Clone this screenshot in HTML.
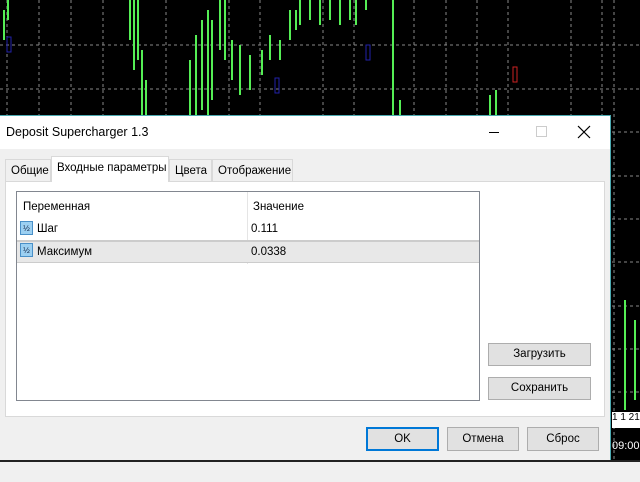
<html><head><style>
body{margin:0;width:640px;height:480px;overflow:hidden;background:#000;position:relative;font-family:"Liberation Sans",sans-serif;font-size:11.5px;color:#000}
.a{position:absolute;white-space:nowrap}
.btn{position:absolute;background:#e1e1e1;border:1px solid #adadad;box-sizing:border-box;text-align:center;font-size:11.5px}
.ic{position:absolute;width:13px;height:14px;background:#9cd0f2;border:1px solid #4a90c8;font-size:8px;color:#124;line-height:14px;text-align:center;box-sizing:border-box}
</style></head><body>
<svg class="a" style="left:0;top:0" width="640" height="480">
<g stroke="#888" stroke-dasharray="3,3" stroke-width="1">
<line x1="0" y1="45" x2="640" y2="45"/><line x1="0" y1="89" x2="640" y2="89"/><line x1="0" y1="132" x2="640" y2="132"/><line x1="0" y1="176" x2="640" y2="176"/><line x1="0" y1="219" x2="640" y2="219"/><line x1="0" y1="262" x2="640" y2="262"/><line x1="0" y1="306" x2="640" y2="306"/><line x1="0" y1="349" x2="640" y2="349"/><line x1="0" y1="392" x2="640" y2="392"/>
<line x1="7" y1="0" x2="7" y2="480"/><line x1="39" y1="0" x2="39" y2="480"/><line x1="71" y1="0" x2="71" y2="480"/><line x1="103" y1="0" x2="103" y2="480"/><line x1="166" y1="0" x2="166" y2="480"/><line x1="229" y1="0" x2="229" y2="480"/><line x1="260" y1="0" x2="260" y2="480"/><line x1="323" y1="0" x2="323" y2="480"/><line x1="354" y1="0" x2="354" y2="480"/><line x1="414" y1="0" x2="414" y2="480"/><line x1="446" y1="0" x2="446" y2="480"/><line x1="477" y1="0" x2="477" y2="480"/><line x1="508" y1="0" x2="508" y2="480"/><line x1="571" y1="0" x2="571" y2="480"/><line x1="602" y1="0" x2="602" y2="480"/><line x1="614" y1="0" x2="614" y2="480"/>
</g>
<g stroke="#5e5" stroke-width="2">
<line x1="4" y1="10" x2="4" y2="40"/><line x1="8" y1="0" x2="8" y2="20"/><line x1="130" y1="0" x2="130" y2="40"/><line x1="134" y1="0" x2="134" y2="70"/><line x1="138" y1="0" x2="138" y2="60"/><line x1="142" y1="50" x2="142" y2="115"/><line x1="146" y1="80" x2="146" y2="115"/><line x1="190" y1="60" x2="190" y2="115"/><line x1="196" y1="35" x2="196" y2="115"/><line x1="202" y1="20" x2="202" y2="110"/><line x1="208" y1="10" x2="208" y2="115"/><line x1="212" y1="20" x2="212" y2="100"/><line x1="220" y1="0" x2="220" y2="50"/><line x1="225" y1="0" x2="225" y2="60"/><line x1="232" y1="40" x2="232" y2="80"/><line x1="240" y1="45" x2="240" y2="95"/><line x1="250" y1="55" x2="250" y2="90"/><line x1="262" y1="50" x2="262" y2="75"/><line x1="270" y1="35" x2="270" y2="60"/><line x1="280" y1="40" x2="280" y2="60"/><line x1="290" y1="10" x2="290" y2="40"/><line x1="296" y1="10" x2="296" y2="30"/><line x1="300" y1="0" x2="300" y2="25"/><line x1="310" y1="0" x2="310" y2="20"/><line x1="320" y1="0" x2="320" y2="25"/><line x1="330" y1="0" x2="330" y2="20"/><line x1="340" y1="0" x2="340" y2="25"/><line x1="350" y1="0" x2="350" y2="20"/><line x1="356" y1="0" x2="356" y2="25"/><line x1="366" y1="0" x2="366" y2="10"/><line x1="393" y1="0" x2="393" y2="115"/><line x1="400" y1="100" x2="400" y2="115"/><line x1="490" y1="95" x2="490" y2="115"/><line x1="496" y1="90" x2="496" y2="115"/><line x1="625" y1="300" x2="625" y2="410"/><line x1="635" y1="320" x2="635" y2="400"/>
</g>
<rect x="7" y="37" width="4" height="15" fill="none" stroke="#22a"/><rect x="366" y="45" width="4" height="15" fill="none" stroke="#22a"/><rect x="275" y="78" width="4" height="15" fill="none" stroke="#22a"/><rect x="513" y="67" width="4" height="15" fill="none" stroke="#c22"/>
</svg>
<div class="a" style="left:612px;top:412px;width:28px;height:16px;background:#fff;font-size:10px">1 1 21</div>
<div class="a" style="left:612px;top:440px;color:#fff;font-size:11px">09:00</div>
<div class="a" style="left:0;top:460px;width:640px;height:20px;background:#f0f0f0;border-top:2px solid #222"></div>
<div class="a" style="left:0;top:115px;width:610px;height:344px;background:#f0f0f0;border-right:1px solid #4ba9b0;border-top:1px solid #4ba9b0">
<div class="a" style="left:0;top:0;width:610px;height:33px;background:#fff"></div>
<div class="a" style="left:6px;top:9px;font-size:12.5px">Deposit Supercharger 1.3</div>
<div class="a" style="left:489px;top:16px;width:10px;height:1px;background:#000"></div>
<div class="a" style="left:536px;top:10px;width:9px;height:9px;border:1px solid #ccc"></div>
<svg class="a" style="left:577px;top:9px" width="14" height="14"><path d="M1 1L13 13M13 1L1 13" stroke="#000" stroke-width="1.2"/></svg>
<div class="a" style="left:5px;top:65px;width:600px;height:236px;background:#fff;border:1px solid #d9d9d9;box-sizing:border-box"></div>
<div class="a" style="left:5px;top:43px;width:46px;height:22px;border:1px solid #d9d9d9;border-bottom:none;box-sizing:border-box;padding:5px 0 0 5px">Общие</div>
<div class="a" style="left:51px;top:40px;width:118px;height:26px;background:#fff;border:1px solid #d9d9d9;border-bottom:none;box-sizing:border-box;padding:5px 0 0 5px">Входные параметры</div>
<div class="a" style="left:169px;top:43px;width:43px;height:22px;border:1px solid #d9d9d9;border-bottom:none;box-sizing:border-box;padding:5px 0 0 5px">Цвета</div>
<div class="a" style="left:212px;top:43px;width:81px;height:22px;border:1px solid #d9d9d9;border-bottom:none;box-sizing:border-box;padding:5px 0 0 5px">Отображение</div>
<div class="a" style="left:16px;top:75px;width:464px;height:210px;border:1px solid #828790;box-sizing:border-box;background:#fff">
<div class="a" style="left:230px;top:0;width:1px;height:72px;background:#e5e5e5"></div>
<div class="a" style="left:6px;top:9px">Переменная</div><div class="a" style="left:236px;top:9px">Значение</div>
<div class="a" style="left:0;top:48px;width:462px;height:23px;background:#e8e8e8;border-top:2px solid #ccc;border-bottom:1px solid #ccc;box-sizing:border-box"></div>
<div class="ic" style="left:3px;top:29px">½</div>
<div class="a" style="left:20px;top:31px">Шаг</div><div class="a" style="left:234px;top:31px">0.111</div>
<div class="ic" style="left:3px;top:51px">½</div>
<div class="a" style="left:20px;top:54px">Максимум</div><div class="a" style="left:234px;top:54px">0.0338</div>
</div>
<div class="btn" style="left:488px;top:227px;width:103px;height:23px;line-height:21px">Загрузить</div>
<div class="btn" style="left:488px;top:261px;width:103px;height:23px;line-height:21px">Сохранить</div>
<div class="btn" style="left:366px;top:311px;width:73px;height:24px;line-height:20px;border:2px solid #0078d7">OK</div>
<div class="btn" style="left:447px;top:311px;width:72px;height:24px;line-height:22px">Отмена</div>
<div class="btn" style="left:527px;top:311px;width:72px;height:24px;line-height:22px">Сброс</div>
</div>
</body></html>
